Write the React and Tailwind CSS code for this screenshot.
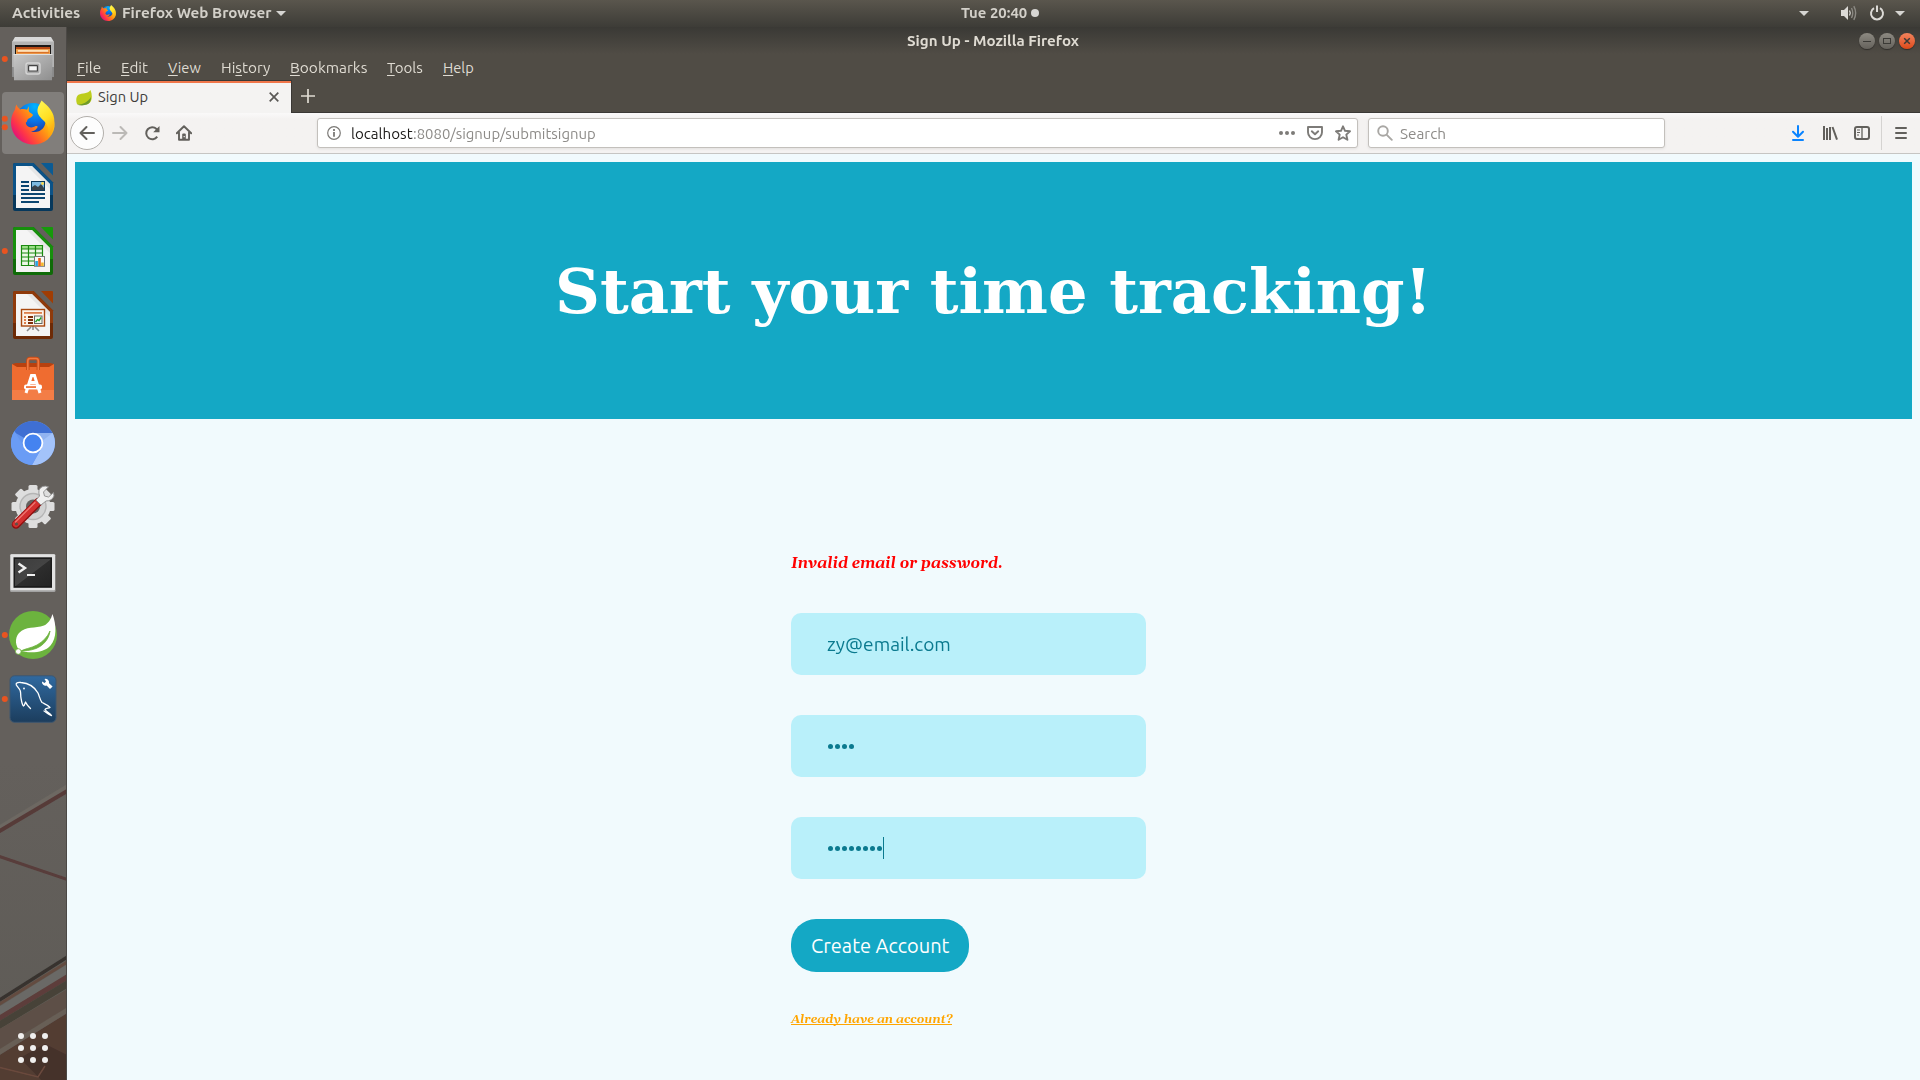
import { useLayoutEffect, useRef, useState } from "react";

// Text condensed or widened horizontally to occupy exactly `w` pixels.
function Fit({ w, className = "", children }) {
  const ref = useRef(null);
  const [scale, setScale] = useState(1);
  useLayoutEffect(() => {
    const n = ref.current.offsetWidth;
    if (n) setScale(w / n);
  }, [w]);
  return (
    <span className={"block shrink-0 text-left whitespace-nowrap " + className} style={{ width: w }}>
      <span ref={ref} className="inline-block origin-left" style={{ transform: `scaleX(${scale})` }}>
        {children}
      </span>
    </span>
  );
}

function FirefoxArt() {
  return (
    <>
      <defs>
        <radialGradient id="ffBlue" cx="0.55" cy="0.1" r="0.95">
          <stop offset="0" stopColor="#00b4ff" />
          <stop offset="0.45" stopColor="#0a72e6" />
          <stop offset="1" stopColor="#2b1a78" />
        </radialGradient>
        <linearGradient id="ffBody" x1="0.95" y1="0.1" x2="0.05" y2="0.75">
          <stop offset="0" stopColor="#fff04a" />
          <stop offset="0.3" stopColor="#ffb80c" />
          <stop offset="0.55" stopColor="#ff7a1c" />
          <stop offset="0.8" stopColor="#ff3647" />
          <stop offset="1" stopColor="#e0107c" />
        </linearGradient>
        <linearGradient id="ffTail" x1="0.3" y1="0" x2="0.7" y2="1">
          <stop offset="0" stopColor="#fff44f" />
          <stop offset="0.5" stopColor="#ffdf22" />
          <stop offset="1" stopColor="#ff9c0e" />
        </linearGradient>
      </defs>
      <circle cx="22" cy="20" r="17.5" fill="url(#ffBlue)" />
      <path
        d="M5.5 4 C6 6 7.5 7.5 9 9 C11 8.4 14 8.5 16 9.2 L18 5.8 C18 8 17.5 9.5 18 11 C19 12.8 21.5 13 22 14.5 C21.5 16.5 18.5 17.5 17 18.5 C15.8 19.5 16.5 21.5 14.8 22 C15 25.5 18.5 28 22.5 26.5 C24 26 25.5 25 26.5 26 C27 27.8 23 31 20 31 C28 33.5 35 27.5 34.5 20 C37 20 38 12 36 9 C41 14 44 20 43.5 26 C42 37 33 44 22.5 44 C10 44 0 34.5 0 22 C0 16 2 12 4 9 C4.2 7 4.8 5.5 5.5 4 Z"
        fill="url(#ffBody)"
      />
      <path
        d="M30.5 0 C34 3 40.5 8 42.5 15 C45 24 42 32 37 36.5 C39 29 37 25 33.5 21 C29.5 17 26 14 26.5 9 C27 5 29.5 3 30.5 0 Z"
        fill="url(#ffTail)"
      />
    </>
  );
}

function OfficeIcon({ dark, mid, corner, children }) {
  return (
    <>
      <path d="M15 8H33.5L53 27.5V54Q53 56 51 56H15Q13 56 13 54V10Q13 8 15 8Z" fill={dark} />
      <path d="M15 8H33.5L53 27.5V40H13V10Q13 8 15 8Z" fill={mid} />
      <path d="M16 11H32L50 29V53H16Z" fill="#f4f4f4" />
      <path d="M32 11L50 29V34L27 11Z" fill="#dcdcdc" opacity=".6" />
      <path d="M41 8H52Q53 8 53 9V20.5Z" fill={corner} />
      {children}
    </>
  );
}

function FilesArt() {
  return (
    <>
      <defs>
        <linearGradient id="cab" x1="0" y1="0" x2="1" y2="1">
          <stop offset="0" stopColor="#c9c9c9" />
          <stop offset="1" stopColor="#8e8e8e" />
        </linearGradient>
      </defs>
      <path d="M12 16H54V50H12Z" fill="#8a8a8a" />
      <path d="M15 10H51L54 15V21H12V15Z" fill="#d8d8d8" />
      <path d="M12 14.5H54V40H12Z" fill="#b4b4b4" />
      <rect x="15" y="18" width="36" height="10" fill="#1c1917" />
      <path d="M16 20H50V28H16Z" fill="#b94a14" />
      <path d="M16 22H50V28H16Z" fill="#f0a04b" />
      <rect x="18" y="23.2" width="30" height="1.4" fill="#fff1d8" />
      <rect x="17" y="25" width="32" height="1.2" fill="#d9712a" />
      <path d="M13.5 27H52.5L52 53.3H14Z" fill="url(#cab)" />
      <path d="M13.5 27.5H52.5" stroke="#e0e0e0" />
      <rect x="26" y="36" width="14" height="11" rx="2" fill="#a9a9a9" stroke="#d5d5d5" strokeWidth="1.4" />
      <rect x="28.6" y="38.6" width="8.8" height="5.4" rx=".6" fill="#f5f5f5" stroke="#444" strokeWidth="1.2" />
    </>
  );
}

function WriterArt() {
  return (
    <OfficeIcon dark="#06385c" mid="#0b5287" corner="#0b5b94">
      <path d="M21 27H29M21 31H29M21 35H29M21 39H45M21 43H45M21 47H39" stroke="#0b4671" strokeWidth="2" />
      <rect x="31.5" y="26.5" width="13" height="9" fill="#7db9e0" stroke="#0b3a5c" />
      <path d="M32 35V32L35 30L38 32L41 29L44 33V35Z" fill="#39424a" />
      <circle cx="42.5" cy="28.5" r="1.4" fill="#ffd84a" />
    </OfficeIcon>
  );
}

function CalcArt() {
  return (
    <OfficeIcon dark="#0f6b08" mid="#178f0c" corner="#169a0b">
      <rect x="21.5" y="26.5" width="21" height="20" fill="#eef8e8" />
      <rect x="21.5" y="26.5" width="21" height="3.5" fill="#9adf86" />
      <path d="M21.5 26.5H42.5V46.5H21.5ZM28.5 26.5V46.5M35.5 26.5V46.5M21.5 30H42.5M21.5 34H42.5M21.5 38H42.5M21.5 42H42.5" fill="none" stroke="#1a8a10" strokeWidth="1.2" />
      <rect x="34.5" y="37.5" width="10" height="9.8" fill="#f8f8f8" stroke="#777" />
      <rect x="35.3" y="42" width="2.6" height="5" fill="#29a3e0" />
      <rect x="38.2" y="39" width="2.6" height="8" fill="#e8611c" />
      <rect x="41.1" y="43.5" width="2.6" height="3.5" fill="#f5b72a" />
    </OfficeIcon>
  );
}

function ImpressArt() {
  return (
    <OfficeIcon dark="#6d2a06" mid="#8f3a0b" corner="#a03d04">
      <path d="M27 48L31 44M39 48L35 44M33 43V47" stroke="#8a8a8a" strokeWidth="1.6" />
      <rect x="21.5" y="26.5" width="23" height="16.5" fill="#fdf3ea" stroke="#a8480f" strokeWidth="1.4" />
      <rect x="24" y="29" width="18" height="1.8" fill="#dd7f4c" />
      <path d="M24 34H26M24 37H26M24 40H26" stroke="#dd7f4c" strokeWidth="1.8" />
      <path d="M28 34H33M28 37H33M28 40H33" stroke="#7c2e08" strokeWidth="2" />
      <rect x="34.5" y="33" width="7.5" height="7.5" fill="#eefbea" stroke="#666" />
      <path d="M35.5 39L37.5 36.5L39 37.5L41.2 34.5" stroke="#1a9a20" strokeWidth="1.3" fill="none" />
    </OfficeIcon>
  );
}

function SoftwareArt() {
  return (
    <>
      <path d="M12 17L16 16H50L54 17L52 21H14Z" fill="#b8410f" />
      <path d="M12 17L17 20H49L54 17V53H12Z" fill="#ef6c30" />
      <path d="M12 43H54V53H12Z" fill="#f58450" opacity=".7" />
      <path d="M27.8 23V14Q27.8 11.5 30 11.5H36Q38.3 11.5 38.3 14V23" fill="none" stroke="#c84d17" strokeWidth="3.4" />
      <path d="M27.8 23V14Q27.8 11.5 30 11.5H36Q38.3 11.5 38.3 14V23" fill="none" stroke="#f07a42" strokeWidth="1.6" />
      <path d="M26 46L31.5 28.5H34.5L40 46M29 35.5H37" fill="none" stroke="#fff" strokeWidth="3" />
      <rect x="24" y="37.6" width="18" height="4.8" rx="2" fill="#fff" />
      <rect x="26" y="39.2" width="10" height="1.7" fill="#ef6c30" />
    </>
  );
}

function ChromiumArt() {
  return (
    <>
      <circle cx="33" cy="32" r="22" fill="#6496f0" />
      <path d="M33 32L13.9 21A22 22 0 0 1 52.5 22H33Z" fill="#3f6fd3" />
      <path d="M33 32V22H52.6A22 22 0 0 1 32 54L41.6 37Z" fill="#a3c3fa" />
      <path d="M13.9 21A22 22 0 0 0 32 54L41.6 37L33 42L24.3 37L14.5 20Z" fill="#6a9cf5" />
      <path d="M33 22H52.5L42 30Z" fill="#7fa3e6" opacity=".5" />
      <circle cx="33" cy="32" r="9.4" fill="#4583f0" stroke="#fff" strokeWidth="1.8" />
    </>
  );
}

function SettingsArt() {
  return (
    <>
      <g fill="#dedede">
        {[0, 45, 90, 135].map((a) => (
          <rect key={a} x="28.5" y="10" width="9" height="43" rx="1.5" transform={`rotate(${a} 33 31.5)`} />
        ))}
        <circle cx="33" cy="31.5" r="17.5" />
      </g>
      <circle cx="33" cy="31.5" r="13" fill="#d2d2d2" stroke="#b5b5b5" strokeWidth="1.4" />
      <circle cx="33" cy="31.5" r="7" fill="#646260" />
      <path d="M16 49.5L38.5 27" stroke="#8f0f0f" strokeWidth="8.5" strokeLinecap="round" />
      <path d="M16 49L38 27" stroke="#d3302f" strokeWidth="6.5" strokeLinecap="round" />
      <path d="M15.5 47L35 27.5" stroke="#ef7a74" strokeWidth="1.2" strokeLinecap="round" />
      <circle cx="16.5" cy="49" r="1.6" fill="#5d5048" />
      <path d="M36 25L41 30L46 26Q52 26 54 21L53.5 17.5L48.5 22L44.5 21L43.5 17L48.5 11.8Q42 9.5 39 15Q38.5 18 39.5 21Z" fill="#efefef" stroke="#8d8d8d" strokeWidth=".9" />
    </>
  );
}

function TerminalArt() {
  return (
    <>
      <defs>
        <linearGradient id="term" x1="0" y1="0" x2="1" y2="1">
          <stop offset="0" stopColor="#3d3d3d" />
          <stop offset=".5" stopColor="#444" />
          <stop offset=".52" stopColor="#2d2d2d" />
          <stop offset="1" stopColor="#242424" />
        </linearGradient>
      </defs>
      <rect x="10" y="15" width="45.5" height="38" rx="1.5" fill="#a2a2a2" />
      <rect x="10.5" y="15.3" width="44.5" height="36" rx="1" fill="#e2e2e2" />
      <rect x="13.5" y="18.3" width="38.5" height="30.5" fill="#1a1a1a" />
      <rect x="15" y="20" width="35.5" height="27" fill="url(#term)" />
      <path d="M18.5 24.5L25 29L18.5 33.5" fill="none" stroke="#f0f0f0" strokeWidth="2.4" />
      <path d="M27 36H35" stroke="#f0f0f0" strokeWidth="2" />
    </>
  );
}

function SpringArt() {
  return (
    <>
      <circle cx="33" cy="32" r="24" fill="#6cb33e" />
      <path d="M52.5 11C56.5 22 57 35 50.5 42.5C44 50 31 50.5 20.5 48C15 44 14.5 35 19 30C26 22.5 35 26 44 22.5C48.5 20.5 51 16 52.5 11Z" fill="#fff" />
      <path d="M20 48.5C24 45.8 31 45.2 37 42C43 38.5 47.5 34 50 28C49 36 43.5 42.5 36 45.5C30 47.8 25 47.5 20 48.5Z" fill="#6cb33e" stroke="#6cb33e" strokeWidth=".8" />
      <circle cx="18.3" cy="48.5" r="2.8" fill="#fff" stroke="#6cb33e" strokeWidth=".8" />
    </>
  );
}

function MysqlArt() {
  return (
    <>
      <defs>
        <linearGradient id="sql" x1="0" y1="0" x2="0" y2="1">
          <stop offset="0" stopColor="#30699f" />
          <stop offset="1" stopColor="#1c3d5d" />
        </linearGradient>
      </defs>
      <rect x="10" y="8.8" width="46" height="46.5" rx="4.5" fill="url(#sql)" stroke="#3c5670" />
      <path
        d="M16.3 18C15.5 16 17.5 15 21 15.5C28 16 34 19 38 26C39.5 29.5 40 33 42 35.5C44.5 36.8 48 38 50 40.5C48.5 41.5 45.5 41 45 42.5C46.5 45 50 46 51.5 48.5C48 47.5 45.5 44.5 44 44M16.3 18C17.5 20 19.5 21.5 20.3 24C21 27 20.5 28.5 21 31C21.5 34 22 37.5 23.5 39C25 38.5 24.5 36.5 25.5 35C26.5 37.5 28.5 39.5 30.5 41.5"
        fill="none" stroke="#fff" strokeWidth="1.3" strokeLinejoin="round" strokeLinecap="round"
      />
      <circle cx="24" cy="21.5" r=".9" fill="#fff" />
      <path d="M42 14.5A3.6 3.6 0 0 0 46.6 18.6L50 22L52.6 19.6L49 16.2A3.6 3.6 0 0 0 44.5 12L46 14.4L44.6 16Z" fill="#fff" />
    </>
  );
}

const dock = [
  { id: "files", art: FilesArt, dots: 1 },
  { id: "firefox", art: null, dots: 2, active: true },
  { id: "writer", art: WriterArt, dots: 0 },
  { id: "calc", art: CalcArt, dots: 1 },
  { id: "impress", art: ImpressArt, dots: 0 },
  { id: "software", art: SoftwareArt, dots: 0 },
  { id: "chromium", art: ChromiumArt, dots: 0 },
  { id: "settings", art: SettingsArt, dots: 0 },
  { id: "terminal", art: TerminalArt, dots: 0 },
  { id: "spring", art: SpringArt, dots: 1 },
  { id: "mysql", art: MysqlArt, dots: 1 },
];

function Dock() {
  return (
    <aside className="relative flex w-[67px] shrink-0 flex-col overflow-hidden border-r border-[#4b4845] bg-[#64605c]">
      <svg className="absolute bottom-0 left-0" width="67" height="320" viewBox="0 760 67 320">
        <defs>
          <linearGradient id="wall" x1="0" y1="0" x2="0" y2="1">
            <stop offset="0" stopColor="#64605c" />
            <stop offset="1" stopColor="#5e5b56" />
          </linearGradient>
          <filter id="soft"><feGaussianBlur stdDeviation=".7" /></filter>
        </defs>
        <rect y="760" width="67" height="320" fill="url(#wall)" />
        <g filter="url(#soft)">
          <path d="M-2 826L69 783V790L-2 833Z" fill="#6d6862" />
          <path d="M-2 832L69 790" stroke="#573a39" strokeWidth="4" />
          <path d="M-2 856L69 880" stroke="#583c3a" strokeWidth="3" />
          <path d="M-2 1001L69 956" stroke="#37332f" strokeWidth="3.4" />
          <path d="M-2 1005L69 961" stroke="#634c40" strokeWidth="3" />
          <path d="M-2 1012L69 968" stroke="#6b6966" strokeWidth="8" />
          <path d="M-2 1019L69 976" stroke="#5d3e3a" strokeWidth="5" />
          <path d="M-2 1026L69 983" stroke="#474238" strokeWidth="7" />
          <path d="M-2 1030L69 988V1090H-2Z" fill="#5d5046" />
          <path d="M-2 1056L69 1012V1090H-2Z" fill="#523c33" />
          <path d="M-2 1053L69 1009" stroke="#675e57" strokeWidth="5" />
          <path d="M20 1058L45 1044L69 1056V1084H45Z" fill="#453029" />
          <path d="M-2 1067L38 1077L45 1066" fill="none" stroke="#6b4a3d" strokeWidth="1.5" />
        </g>
      </svg>
      {dock.map(({ id, art: Art, dots, active }) => (
        <div key={id} className="relative h-16 w-[67px] shrink-0">
          <svg width="67" height="64" viewBox="0 0 67 64">
            {active && <rect x="2" y="1" width="62" height="62" rx="4" fill="#817e7b" />}
            {Art ? <Art /> : <g transform="translate(11 9.5)"><FirefoxArt /></g>}
            {dots === 1 && <circle cx="4.8" cy="32" r="3" fill="#e95420" />}
            {dots === 2 && (
              <g fill="#e95420"><circle cx="4.8" cy="27.7" r="3" /><circle cx="4.8" cy="36.2" r="3" /></g>
            )}
          </svg>
        </div>
      ))}
      <div className="relative mt-auto mb-[17px] ml-[18px] grid w-[30px] grid-cols-3 gap-1.5">
        {Array.from({ length: 9 }, (_, i) => (
          <span key={i} className="size-1.5 rounded-full bg-[#f0efee]" />
        ))}
      </div>
    </aside>
  );
}

function Caret({ className = "" }) {
  return (
    <svg className={"shrink-0 " + className} width="10" height="5" viewBox="0 0 10 5">
      <path d="M0 0H10L5 5Z" fill="#d6d5d2" />
    </svg>
  );
}

function TopBar() {
  return (
    <header className="flex h-[27px] shrink-0 items-center bg-linear-to-b from-[#5a564d] to-[#3d3c37] pb-px text-[14px] leading-[26px] font-bold text-[#d3d0c9]">
      <Fit w={68} className="ml-3">Activities</Fit>
      <svg className="ml-5 shrink-0" width="16" height="16" viewBox="0 0 44 44"><FirefoxArt /></svg>
      <Fit w={149} className="ml-[5.5px]">Firefox Web Browser</Fit>
      <Caret className="ml-[5px]" />
      <Fit w={66} className="ml-[675px]">Tue 20:40</Fit>
      <span className="ml-1 size-2 rounded-full bg-[#d6d5d2]" />
      <Caret className="ml-[760px]" />
      <svg className="ml-[32px] shrink-0" width="16" height="16" viewBox="0 0 16 16">
        <path d="M0 5H3L7 1V15L3 11H0Z" fill="#dcdad6" />
        <path d="M8.5 5.5Q10 8 8.5 10.5" stroke="#dcdad6" strokeWidth="1.3" fill="none" />
        <path d="M10.5 3Q13 8 10.5 13M12.8 1.2Q16.5 8 12.8 14.8" stroke="#8b8983" strokeWidth="1.4" fill="none" />
      </svg>
      <svg className="ml-3 shrink-0" width="16" height="16" viewBox="0 0 16 16">
        <path d="M5 3.2A6 6 0 1 0 11 3.2M8 .5V7" stroke="#dcdad6" strokeWidth="2" fill="none" />
      </svg>
      <Caret className="ml-[10px]" />
    </header>
  );
}

const menus = [
  ["", "F", "ile", 24],
  ["", "E", "dit", 27],
  ["", "V", "iew", 33],
  ["Hi", "s", "tory", 49],
  ["", "B", "ookmarks", 77],
  ["", "T", "ools", 36],
  ["", "H", "elp", 31],
];

function WindowButton({ close, children }) {
  return (
    <span
      className={
        "flex size-4 items-center justify-center rounded-full bg-linear-to-b shadow-[0_1px_1px_#2f2d2a] " +
        (close ? "from-[#f2835c] to-[#dd4814]" : "from-[#8d8a82] to-[#65625c]")
      }
    >
      <svg width="16" height="16" viewBox="0 0 16 16" fill="none" stroke="#3b3a36" strokeWidth="1">{children}</svg>
    </span>
  );
}

function Chrome() {
  return (
    <div className="shrink-0 bg-[#504c45]">
      <div className="flex h-[27px] items-center bg-linear-to-b from-[#3a3935] to-[#504c45] text-[14px] leading-[26px] font-bold text-[#dfdbd2]">
        <Fit w={172} className="ml-[840px] pt-px">Sign Up - Mozilla Firefox</Fit>
        <div className="mr-[5px] ml-auto flex gap-1">
          <WindowButton><path d="M4 8.5H12" /></WindowButton>
          <WindowButton><rect x="4.5" y="5.5" width="7" height="5" /></WindowButton>
          <WindowButton close><path d="M5.2 5.2L10.8 10.8M10.8 5.2L5.2 10.8" strokeWidth="1.5" /></WindowButton>
        </div>
      </div>
      <nav className="flex h-[26px] gap-5 pl-[10px] text-[14.67px] leading-[28px] text-[#dfdbd2]">
        {menus.map(([a, key, b, w]) => (
          <Fit key={key + b} w={w}>
            {a}<span className="underline decoration-1 underline-offset-[2px]">{key}</span>{b}
          </Fit>
        ))}
      </nav>
      <div className="flex h-[33px] border-b border-[#3a3835]">
        <div className="-mb-px flex w-[225px] items-center border-t border-r border-[#3a3835] bg-[#f4f3f2] shadow-[inset_0_2px_0_#f0764a]">
          <svg className="mt-px ml-[9px] shrink-0" width="16" height="16" viewBox="0 0 16 16">
            <path d="M14.5 0C16.5 5 16.3 10 13.5 13C10 15.5 4 15.5 1.2 14.3C0 12 -.5 7 2.5 4.8C6 2.8 12 4 14.5 0Z" fill="#bdcd1c" />
            <path d="M1 14.8C7 14.5 12 12 15 7C15 11 13.5 13.5 11 14.6C8 15.7 4 15.5 1 14.8Z" fill="#6f9a2b" />
          </svg>
          <Fit w={50} className="ml-1.5 text-[14.67px] leading-5 text-[#3f3d3a]">Sign Up</Fit>
          <svg className="mr-3 ml-auto" width="10" height="10" viewBox="0 0 10 10">
            <path d="M.7 .7L9.3 9.3M9.3 .7L.7 9.3" stroke="#5a5855" strokeWidth="1.7" />
          </svg>
        </div>
        <svg className="mt-2 ml-[9px]" width="14" height="16" viewBox="0 0 14 16">
          <path d="M0 8H14M7 1V15" stroke="#dfdbd2" strokeWidth="1.7" />
        </svg>
      </div>
    </div>
  );
}

function Toolbar() {
  return (
    <div className="flex h-[41px] shrink-0 items-center border-b border-[#c6c5c3] bg-linear-to-b from-[#faf9f9] to-[#f4f2f1] to-15%">
      <span className="ml-[3px] flex size-[34px] shrink-0 items-center justify-center rounded-full border border-[#b2afab] bg-[#fdfdfd]">
        <svg width="16" height="16" viewBox="0 0 16 16" fill="none" stroke="#62605c" strokeWidth="2" strokeLinecap="round" strokeLinejoin="round">
          <path d="M15 8H1.5M7.5 2L1.5 8L7.5 14" />
        </svg>
      </span>
      <svg className="ml-2 shrink-0" width="16" height="16" viewBox="0 0 16 16" fill="none" stroke="#bbb9b6" strokeWidth="2" strokeLinecap="round" strokeLinejoin="round">
        <path d="M1 8H14.5M8.5 2L14.5 8L8.5 14" />
      </svg>
      <svg className="ml-4 shrink-0" width="16" height="16" viewBox="0 0 16 16">
        <path d="M13.2 11.6A6 6 0 1 1 12.5 4L13.8 5.3" fill="none" stroke="#62605c" strokeWidth="2" />
        <path d="M15.5 1V7.2H9.2Z" fill="#62605c" />
      </svg>
      <svg className="ml-4 shrink-0" width="16" height="16" viewBox="0 0 16 16">
        <path d="M.8 8.3L8 1.2L15.2 8.3M3 7.5V14.8H13V7.5" fill="none" stroke="#62605c" strokeWidth="1.9" strokeLinejoin="round" strokeLinecap="round" />
        <path d="M6.2 15V9.5Q6.2 8.5 7.2 8.5H8.8Q9.8 8.5 9.8 9.5V15Z" fill="#62605c" />
        <rect x="7.6" y="11" width="1.2" height="1.2" fill="#f3f1f0" />
      </svg>
      <div className="ml-[125px] flex h-[30px] w-[1041px] shrink-0 items-center rounded-[3px] border border-[#c3c0bc] bg-white shadow-[0_1px_3px_rgba(0,0,0,0.08)]">
        <svg className="ml-[9px]" width="14" height="14" viewBox="0 0 14 14">
          <circle cx="7" cy="7" r="6.3" fill="none" stroke="#7b7976" strokeWidth="1.2" />
          <path d="M7 6V10.8M7 3V4.9" stroke="#7b7976" strokeWidth="1.8" />
        </svg>
        <Fit w={62} className="ml-[10px] pt-0.5 text-[14.67px] leading-5 text-[#1c1a18]">localhost</Fit>
        <Fit w={183} className="pt-0.5 text-[14.67px] leading-5 text-[#8d8b88]">:8080/signup/submitsignup</Fit>
        <svg className="ml-auto" width="16" height="16" viewBox="0 0 16 16" fill="#7d7b78">
          <circle cx="2" cy="8" r="2" /><circle cx="8" cy="8" r="2" /><circle cx="14" cy="8" r="2" />
        </svg>
        <svg className="ml-3" width="16" height="16" viewBox="0 0 16 16" fill="none" stroke="#7d7b78" strokeWidth="1.9" strokeLinejoin="round" strokeLinecap="round">
          <path d="M1 2H15V7.3A7 6.8 0 0 1 1 7.3Z" /><path d="M4.8 6.3L8 9.3L11.2 6.3" />
        </svg>
        <svg className="mr-[6px] ml-3" width="16" height="16" viewBox="0 0 16 16" fill="none" stroke="#7d7b78" strokeWidth="1.9" strokeLinejoin="round">
          <path d="M8 1.3L10 5.8L15 6.3L11.3 9.6L12.4 14.8L8 12.2L3.6 14.8L4.7 9.6L1 6.3L6 5.8Z" />
        </svg>
      </div>
      <div className="ml-[10px] flex h-[30px] w-[297px] shrink-0 items-center rounded-[3px] border border-[#c3c0bc] bg-white shadow-[0_1px_3px_rgba(0,0,0,0.08)]">
        <svg className="ml-2" width="16" height="16" viewBox="0 0 16 16" fill="none" stroke="#a9a7a4" strokeWidth="1.9" strokeLinecap="round">
          <circle cx="6" cy="6" r="4.8" /><path d="M9.8 9.8L14.8 14.8" />
        </svg>
        <Fit w={46} className="ml-[7px] pt-0.5 text-[14.67px] leading-5 text-[#8d8b88]">Search</Fit>
      </div>
      <svg className="ml-[125px] shrink-0" width="16" height="16" viewBox="0 0 16 16" fill="none" stroke="#0a84ff" strokeWidth="2" strokeLinecap="round" strokeLinejoin="round">
        <path d="M8 1V11.5M3 6.8L8 11.8L13 6.8M3 15H13" />
      </svg>
      <svg className="ml-4 shrink-0" width="16" height="16" viewBox="0 0 16 16" stroke="#62605c" strokeWidth="2">
        <path d="M2 1V15M5 3V15M8 2V15M10.5 2L15 14.7" />
      </svg>
      <svg className="ml-4 shrink-0" width="16" height="16" viewBox="0 0 16 16" fill="none" stroke="#62605c">
        <rect x="1" y="2" width="14" height="12" rx="2" strokeWidth="2" />
        <path d="M8 2V14" strokeWidth="1.3" /><path d="M3 5H6M3 7.5H6M3 10H5" strokeWidth="1" />
      </svg>
      <span className="ml-[11px] h-[34px] w-px shrink-0 bg-[#d5d3d1]" />
      <svg className="ml-[11px] shrink-0" width="16" height="16" viewBox="0 0 16 16" stroke="#62605c" strokeWidth="2" strokeLinecap="round">
        <path d="M3 3H13M3 8H13M3 13H13" />
      </svg>
    </div>
  );
}

function Bullets({ count }) {
  return (
    <span className="ml-px flex gap-[2px]">
      {Array.from({ length: count }, (_, i) => (
        <span key={i} className="size-[5px] rounded-full bg-[#0b7a8f]" />
      ))}
    </span>
  );
}

function Field({ className = "", children }) {
  return (
    <div className={"flex h-[62px] w-[355px] items-center rounded-[10px] bg-[#b9f0fa] pl-9 text-[#0b7a8f] " + className}>
      {children}
    </div>
  );
}

function Page() {
  return (
    <main className="flex-1 overflow-hidden bg-[#f1fafd] px-2 pt-2">
      <div className="flex h-[257px] justify-center bg-[#14a8c5]">
        <h1 className="pt-[92px] font-['DejaVu_Serif',serif] text-[62.4px] leading-[74px] font-bold text-white">
          <Fit w={877}>Start your time tracking!</Fit>
        </h1>
      </div>
      <form className="ml-[716px] flex flex-col items-start pt-[132px]">
        <p className="font-['Gelasio','Liberation_Serif',serif] text-[16px] leading-6 font-bold text-[#ff0000] italic">
          <Fit w={212}>Invalid email or password.</Fit>
        </p>
        <Field className="mt-[38px]">
          <Fit w={124} className="pt-0.5 text-[18.67px] leading-6">zy@email.com</Fit>
        </Field>
        <Field className="mt-10"><Bullets count={4} /></Field>
        <Field className="mt-10">
          <Bullets count={8} />
          <span className="mb-px ml-px h-[22px] w-px bg-[#0b7a8f]" />
        </Field>
        <button type="button" className="mt-10 flex h-[53px] w-[178px] items-center rounded-[25px] bg-[#14a8c5] pl-5 text-[20px] leading-6 text-white">
          <Fit w={138}>Create Account</Fit>
        </button>
        <a className="mt-[43px] block border-b border-[#ffa500] font-['Gelasio','Liberation_Serif',serif] text-[12px] leading-[9px] font-bold text-[#ffa500] italic">
          <Fit w={161}>Already have an account?</Fit>
        </a>
      </form>
    </main>
  );
}

export default function App() {
  return (
    <div className="flex h-[1080px] w-[1920px] flex-col overflow-hidden font-['Ubuntu','Noto_Sans','Open_Sans',sans-serif]">
      <TopBar />
      <div className="flex min-h-0 flex-1">
        <Dock />
        <div className="flex min-w-0 flex-1 flex-col">
          <Chrome />
          <Toolbar />
          <Page />
        </div>
      </div>
    </div>
  );
}
